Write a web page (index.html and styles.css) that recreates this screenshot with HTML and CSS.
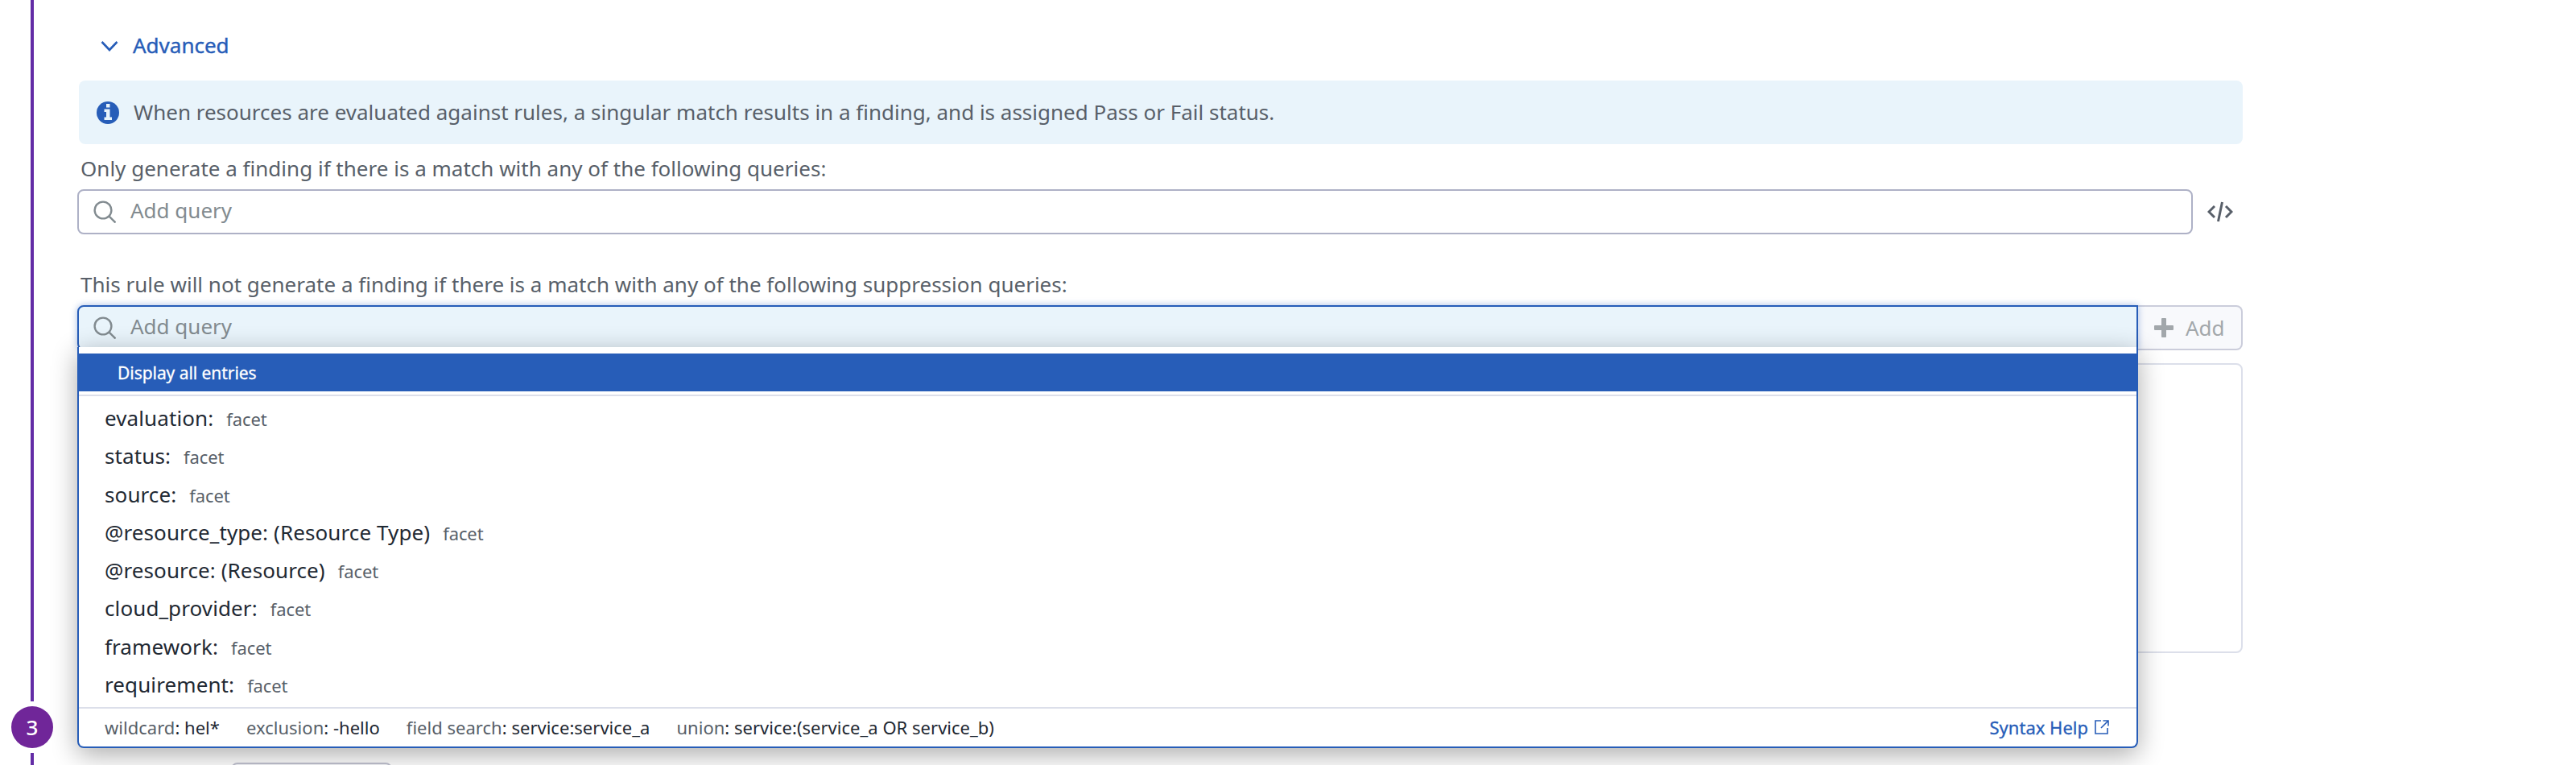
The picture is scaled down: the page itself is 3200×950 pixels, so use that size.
FILE: index.html
```html
<!DOCTYPE html>
<html lang="en">
<head>
<meta charset="utf-8">
<title>Rule editor</title>
<link rel="stylesheet" href="styles.css">
</head>
<body>
<div class="page">
  <aside class="rail">
    <div class="rail-line rail-line-top"></div>
    <div class="step">3</div>
    <div class="rail-line rail-line-rest"></div>
  </aside>
  <main class="content">
    <div class="advanced">
      <svg class="chevron" viewBox="0 0 22 16"><path d="M1.500 3 11 13 20.500 3" fill="none" stroke="currentColor" stroke-width="2.600"/></svg>
      <span>Advanced</span>
    </div>
    <div class="notice">
      <svg class="info" viewBox="0 0 28 28"><circle cx="14" cy="14" r="14" fill="#275db8"/><path d="M12 3h4.500v4.500H12zM9.500 9.500h7v10H19v3.500H9.500v-3.500H12v-6.500H9.500z" fill="#e9f4fb"/></svg>
      <span class="notice-text">When resources are evaluated against rules, a singular match results in a finding, and is assigned Pass or Fail status.</span>
    </div>
    <div class="label label-match">Only generate a finding if there is a match with any of the following queries:</div>
    <div class="query-row">
      <div class="query">
        <svg class="search" viewBox="0 0 28 28"><circle cx="12" cy="12" r="10.400"/><path d="M19.300 19.300 27.500 27.500"/></svg>
        <span class="placeholder">Add query</span>
      </div>
      <svg class="code" viewBox="0 0 32 26"><path d="M9 6 2 13l7 7M23 6 30 13l-7 7M18.500 1 13.500 25"/></svg>
    </div>
    <div class="label label-suppress">This rule will not generate a finding if there is a match with any of the following suppression queries:</div>
    <div class="suppress-row">
      <div class="query query-active">
        <svg class="search" viewBox="0 0 28 28"><circle cx="12" cy="12" r="10.400"/><path d="M19.300 19.300 27.500 27.500"/></svg>
        <span class="placeholder">Add query</span>
        <div class="menu">
          <div class="menu-all">Display all entries</div>
          <div class="facets">
            <div class="facet">evaluation:<small>facet</small></div>
            <div class="facet">status:<small>facet</small></div>
            <div class="facet">source:<small>facet</small></div>
            <div class="facet">@resource_type: (Resource Type)<small>facet</small></div>
            <div class="facet">@resource: (Resource)<small>facet</small></div>
            <div class="facet">cloud_provider:<small>facet</small></div>
            <div class="facet">framework:<small>facet</small></div>
            <div class="facet">requirement:<small>facet</small></div>
          </div>
          <div class="menu-foot">
            <span><i>wildcard</i>: hel*</span>
            <span><i>exclusion</i>: -hello</span>
            <span><i>field search</i>: service:service_a</span>
            <span><i>union</i>: service:(service_a OR service_b)</span>
            <a class="help">Syntax Help
              <svg class="external" viewBox="0 0 18 18"><path d="M8 1H1v16h15v-7M10.500 1H17v6.500M17 1 8 10"/></svg>
            </a>
          </div>
        </div>
      </div>
      <div class="add">
        <svg class="plus" viewBox="0 0 26 26"><path d="M11 1h4a1 1 0 0 1 1 1v8h8a1 1 0 0 1 1 1v4a1 1 0 0 1-1 1h-8v8a1 1 0 0 1-1 1h-4a1 1 0 0 1-1-1v-8H2a1 1 0 0 1-1-1v-4a1 1 0 0 1 1-1h8V2a1 1 0 0 1 1-1z" fill="currentColor"/></svg>
        <span class="add-text">Add</span>
      </div>
    </div>
    <div class="results"></div>
    <div class="next-field"></div>
  </main>
</div>
</body>
</html>
```
FILE: styles.css
```css
* { box-sizing: border-box; }
body {
  margin: 0;
  background: #fff;
  color: #1f2933;
  font-family: "Noto Sans", sans-serif;
  font-size: 26px;
  line-height: 36px;
}
svg { display: block; flex: none; fill: none; }
.page { display: flex; height: 950px; overflow: hidden; }
.rail { width: 96px; display: flex; flex-direction: column; padding-left: 14px; gap: 6px; }
.rail-line { width: 4px; margin-left: 24px; background: #632ca6; }
.rail-line-top { height: 871px; }
.rail-line-rest { flex: 1; }
.step {
  width: 52px; height: 52px; flex: none;
  border-radius: 50%;
  background: #702699;
  color: #fff;
  font-weight: 500;
  line-height: 52px;
  text-align: center;
}
.content { width: 2690px; display: flex; flex-direction: column; }
.content > * { flex: none; }
.advanced {
  height: 100px; padding: 12px 0 0 29px;
  display: flex; align-items: center; gap: 18px;
  color: #275db8;
  -webkit-text-stroke: .4px #275db8;
}
.chevron { width: 22px; height: 16px; margin-top: 2px; }
.notice {
  height: 79px; margin-left: 2px; padding: 0 22px;
  display: flex; align-items: center; gap: 18px;
  border-radius: 8px;
  background: #e9f4fb;
  color: #585f69;
}
.notice-text { padding-bottom: 2px; }
.info { width: 28px; height: 28px; }
.label { padding-left: 4px; color: #585f69; letter-spacing: .01px; }
.label-match { height: 56px; padding-top: 12px; }
.label-suppress { height: 88px; padding-top: 44px; }
.query-row { display: flex; align-items: center; gap: 18px; }
.query {
  width: 2628px; height: 56px; padding: 0 18px;
  display: flex; align-items: center; gap: 18px;
  border: 2px solid #aeb1c6;
  border-radius: 8px;
}
.search { width: 28px; height: 28px; stroke: #828b90; stroke-width: 2.4; }
.placeholder { padding-bottom: 4px; color: #828b90; }
.code { width: 32px; height: 26px; stroke: #585f69; stroke-width: 3; }
.suppress-row { display: flex; height: 56px; }
.query-active {
  position: relative; z-index: 1;
  width: 2560px;
  border-color: #275db8;
  border-radius: 8px 0 0 8px;
  background: #e9f4fb;
  box-shadow: 0 0 8px rgba(39, 93, 184, .4);
}
.menu {
  position: absolute; top: 50px; left: -2px;
  width: 2560px; height: 498px; padding-top: 8px;
  display: flex; flex-direction: column;
  border: 2px solid #275db8; border-top: 0;
  border-radius: 0 0 8px 8px;
  background: #fff;
  box-shadow: 0 8px 32px rgba(0, 0, 0, .33);
}
.menu-all {
  height: 47px; padding-left: 48px;
  background: #275db8; color: #fff;
  font-size: 21px; line-height: 49px;
  letter-spacing: -.05px;
  -webkit-text-stroke: .3px #fff;
}
.facets {
  margin-top: 4px; height: 390px; padding: 4px 32px 0;
  border-top: 2px solid #dcdfea; border-bottom: 2px solid #dcdfea;
}
.facet { height: 47.250px; line-height: 47px; white-space: nowrap; letter-spacing: .1px; }
.facet small { margin-left: 16px; font-size: 22px; color: #585f69; letter-spacing: -.1px; }
.menu-foot {
  flex: 1; padding: 0 34px 1px 32px;
  display: flex; align-items: center; gap: 33px;
  font-size: 22px;
  letter-spacing: .02px;
}
.menu-foot i { font-style: normal; color: #585f69; }
.help {
  margin-left: auto; display: flex; align-items: center; gap: 8px;
  color: #275db8;
  letter-spacing: 0;
  -webkit-text-stroke: .3px #275db8;
}
.external { width: 18px; height: 18px; stroke: currentColor; stroke-width: 1.6; }
.add {
  width: 130px; padding-left: 19px;
  display: flex; align-items: center; gap: 14px;
  border: 2px solid #cbcddb; border-left: 0;
  border-radius: 0 8px 8px 0;
  background: #f8f9fc;
  color: #a2a7ab;
}
.add-text { padding-bottom: 1px; }
.plus { width: 26px; height: 26px; }
.results {
  height: 360px; margin-top: 16px;
  border: 2px solid #dcdfea; border-radius: 8px;
}
.next-field {
  width: 200px; height: 56px; margin: 136px 0 0 191px;
  border: 2px solid #c3c4d2; border-radius: 8px;
  background: #f8f9fc;
}
```
